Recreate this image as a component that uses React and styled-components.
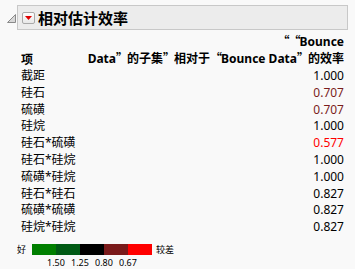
import React from "react";
import styled, { createGlobalStyle } from "styled-components";

const Global = createGlobalStyle`
  html, body { margin: 0; padding: 0; background: #f9f9f9; }
  body {
    font-family: "Noto Sans", "Noto Sans CJK SC", sans-serif;
    font-size: 12px;
    color: #000;
  }
`;

const Page = styled.div`
  width: 355px;
  height: 269px;
  box-sizing: border-box;
  padding: 5px 7px 0 7px;
  overflow: hidden;
`;

const HeaderRow = styled.div`
  display: flex;
  align-items: center;
  gap: 1px;
`;

const Disclosure = styled.svg`
  width: 9px;
  height: 9px;
  flex: none;
  margin-top: 1px;
`;

const TitleBox = styled.div`
  flex: 1;
  height: 25px;
  box-sizing: border-box;
  border: 1px solid #c8c8c8;
  background: #ececec;
  display: flex;
  align-items: center;
  padding-left: 4px;
  gap: 3px;
`;

const MenuButton = styled.div`
  width: 13px;
  height: 12px;
  box-sizing: border-box;
  border: 1px solid #a9a9a9;
  border-radius: 2px;
  background: linear-gradient(#fdfdfd, #e8e8e8);
  display: flex;
  align-items: center;
  justify-content: center;
`;

const Title = styled.div`
  font-family: "Noto Sans CJK SC", sans-serif;
  font-weight: 700;
  font-size: 15px;
  line-height: 20px;
`;

const Table = styled.div`
  display: grid;
  grid-template-columns: auto 1fr;
  margin: 3px 4px 0 14px;
`;

const HeadTerm = styled.div`
  align-self: end;
  font-family: "Noto Sans CJK SC", sans-serif;
  font-weight: 700;
  line-height: 16px;
  margin-bottom: 1px;
`;

const HeadEff = styled.div`
  text-align: right;
  font-weight: 700;
  line-height: 16px;
  margin-bottom: 1px;
  white-space: nowrap;
`;

const Q = styled.span`
  display: inline-block;
  width: 11px;
  font-family: "Noto Sans CJK SC", sans-serif;
  text-align: ${(p) => (p.$open ? "right" : "left")};
`;

const Cjk = styled.span`
  font-family: "Noto Sans CJK SC", sans-serif;
`;

const Term = styled.div`
  font-family: "Noto Sans", "Noto Sans CJK SC", sans-serif;
  line-height: 16.8px;
  height: 16.8px;
  white-space: nowrap;
`;

const Value = styled.div`
  text-align: right;
  line-height: 16.8px;
  height: 16.8px;
  color: ${(p) => p.$color};
`;

const Legend = styled.div`
  display: grid;
  grid-template-columns: 15px 120px auto;
  align-items: center;
  margin: 8px 0 0 10px;
  font-size: 9px;
`;

const LegendWord = styled.div`
  font-family: "Noto Sans CJK SC", sans-serif;
  line-height: 11px;
  padding-left: ${(p) => p.$pad || 0}px;
`;

const Bar = styled.div`
  display: flex;
  height: 11px;
`;

const Swatch = styled.div`
  flex: 1;
  background: ${(p) => p.$color};
`;

const Ticks = styled.div`
  grid-column: 2;
  display: flex;
  padding-left: 12px;
  margin-top: 3px;
`;

const Tick = styled.div`
  width: 24px;
  text-align: center;
  line-height: 10px;
  font-size: 9px;
`;

const rows = [
  ["截距", "1.000"],
  ["硅石", "0.707"],
  ["硫磺", "0.707"],
  ["硅烷", "1.000"],
  ["硅石*硫磺", "0.577"],
  ["硅石*硅烷", "1.000"],
  ["硫磺*硅烷", "1.000"],
  ["硅石*硅石", "0.827"],
  ["硫磺*硫磺", "0.827"],
  ["硅烷*硅烷", "0.827"],
];

const colorFor = (v) => {
  const n = parseFloat(v);
  if (n >= 1.5) return "#008000";
  if (n >= 1.25) return "#005c14";
  if (n > 0.8) return "#000000";
  if (n > 0.67) return "#7a1c1c";
  return "#ff0000";
};

const legendColors = ["#007f00", "#005a14", "#000000", "#7a1a1a", "#ff0000"];

export default function App() {
  return (
    <>
      <Global />
      <Page>
        <HeaderRow>
          <Disclosure viewBox="0 0 9 9">
            <polygon points="8.5,0.5 8.5,8.5 0.5,8.5" fill="#d8d8d8" stroke="#8a8a8a" strokeWidth="1" />
          </Disclosure>
          <TitleBox>
            <MenuButton>
              <svg width="7" height="4" viewBox="0 0 7 4">
                <polygon points="0,0 7,0 3.5,4" fill="#e00000" />
              </svg>
            </MenuButton>
            <Title>相对估计效率</Title>
          </TitleBox>
        </HeaderRow>
        <Table>
          <HeadTerm>项</HeadTerm>
          <HeadEff>
            <Q $open>“</Q><Q $open>“</Q>Bounce
            <br />
            Data<Q>”</Q><Cjk>的子集</Cjk><Q>”</Q><Cjk>相对于</Cjk><Q $open>“</Q>Bounce Data<Q>”</Q><Cjk>的效率</Cjk>
          </HeadEff>
          {rows.map(([t, v]) => (
            <React.Fragment key={t}>
              <Term>{t}</Term>
              <Value $color={colorFor(v)}>{v}</Value>
            </React.Fragment>
          ))}
        </Table>
        <Legend>
          <LegendWord>好</LegendWord>
          <Bar>
            {legendColors.map((c) => (
              <Swatch key={c} $color={c} />
            ))}
          </Bar>
          <LegendWord $pad={4}>较差</LegendWord>
          <Ticks>
            <Tick>1.50</Tick>
            <Tick>1.25</Tick>
            <Tick>0.80</Tick>
            <Tick>0.67</Tick>
          </Ticks>
        </Legend>
      </Page>
    </>
  );
}
